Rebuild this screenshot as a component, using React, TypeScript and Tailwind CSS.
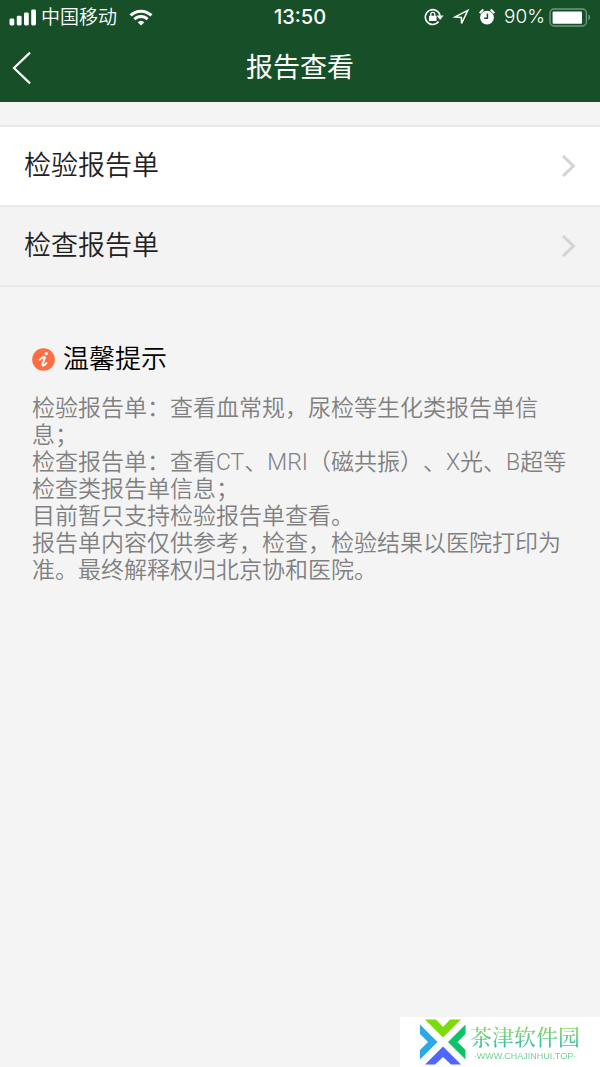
import type { ReactNode } from "react";

const reports = [
  { id: "lab", label: "检验报告单", active: false },
  { id: "exam", label: "检查报告单", active: true },
];

const tips = [
  "检验报告单：查看血常规，尿检等生化类报告单信息；",
  "检查报告单：查看CT、MRI（磁共振）、X光、B超等检查类报告单信息；",
  "目前暂只支持检验报告单查看。",
  "报告单内容仅供参考，检查，检验结果以医院打印为准。最终解释权归北京协和医院。",
];

function StatusBar() {
  return (
    <div className="flex h-[34px] items-center px-2 text-white">
      {/* Left: signal, carrier, wifi */}
      <div className="flex flex-1 items-center">
        <svg width="29" height="17" viewBox="0 0 29 17" fill="currentColor">
          <rect x="1.5" y="9.5" width="4.8" height="7" rx="1.4" />
          <rect x="8.8" y="6.8" width="4.8" height="9.7" rx="1.4" />
          <rect x="16" y="3.6" width="4.8" height="12.9" rx="1.4" />
          <rect x="23.2" y="0.4" width="4.8" height="16.1" rx="1.4" />
        </svg>
        <span className="ml-1 pt-0.5 text-[19px] leading-8 font-[350]">中国移动</span>
        <svg
          className="ml-3"
          width="24"
          height="17"
          viewBox="0 0 24 17"
          fill="none"
          stroke="currentColor"
          strokeWidth="3"
        >
          <path d="M1.6 6.4a14.8 14.8 0 0 1 20.8 0" />
          <path d="M5.4 10.3a9.4 9.4 0 0 1 13.2 0" />
          <path
            d="M12 16.6 8.7 13.2a4.8 4.8 0 0 1 6.6 0z"
            fill="currentColor"
            stroke="none"
          />
        </svg>
      </div>

      <span className="text-[20px] font-medium">13:50</span>

      {/* Right: lock, location, alarm, battery */}
      <div className="flex flex-1 items-center justify-end">
        <svg width="20" height="18" viewBox="0 0 20 18" fill="none" stroke="currentColor">
          <path d="M14.6 13.6A7.4 7.4 0 1 1 16 7.6" strokeWidth="1.6" />
          <path d="M12.600 7.400h7l-3.500 4.600z" fill="currentColor" stroke="none" />
          <rect x="5" y="7.800" width="7.600" height="5.200" rx="0.600" fill="currentColor" stroke="none" />
          <path d="M6.800 8V6.400a2 2 0 0 1 4 0V8" strokeWidth="1.300" />
        </svg>
        <svg
          className="ml-2"
          width="18"
          height="18"
          viewBox="0 0 18 18"
          fill="none"
          stroke="currentColor"
          strokeWidth="1.5"
          strokeLinejoin="miter"
        >
          <path d="M15.800 2.400 3 8.900l6.400.6.200 6z" />
        </svg>
        <svg className="ml-2" width="18" height="18" viewBox="0 0 18 18">
          <circle cx="9" cy="9.6" r="6.9" fill="currentColor" />
          <path
            d="M1.900 5.200A8.800 8.800 0 0 1 5.400 1.700M16.100 5.200a8.800 8.800 0 0 0-3.500-3.500"
            stroke="currentColor"
            strokeWidth="2.200"
            fill="none"
          />
          <path d="M9.400 5.400v4.800H6.200" stroke="#174f28" strokeWidth="1.500" fill="none" />
        </svg>
        <span className="ml-2 text-[19px] font-light">90%</span>
        <svg className="ml-1" width="43" height="19" viewBox="0 0 43 19">
          <rect
            x="1"
            y="1"
            width="36.4"
            height="17"
            rx="4"
            fill="none"
            stroke="#6f9a7a"
            strokeWidth="1.4"
          />
          <rect x="3.6" y="3.4" width="29.4" height="12.4" rx="1" fill="white" />
          <path d="M39.4 6.6c2.4 1 2.4 4.8 0 5.8z" fill="#6f9a7a" />
        </svg>
      </div>
    </div>
  );
}

function NavBar({ title }: { title: string }) {
  return (
    <div className="grid h-[68px] grid-cols-[1fr_auto_1fr] items-center text-white">
      <button type="button" aria-label="返回" className="w-11 pl-3">
        <svg width="20" height="34" viewBox="0 0 20 34" fill="none" stroke="currentColor" strokeWidth="2.2">
          <path d="M18 1.6 2 17l16 15.4" />
        </svg>
      </button>
      <h1 className="text-[27px] leading-10 font-normal">{title}</h1>
    </div>
  );
}

function ReportRow({ label, active }: { label: string; active: boolean }) {
  return (
    <li className="border-b-2 border-[#e9e9e9]">
      <button
        type="button"
        className={`flex h-[78px] w-full items-center justify-between px-6 text-left ${
          active ? "bg-[#f4f3f4]" : "bg-white"
        }`}
      >
        <span className="text-[27px] leading-10 font-[350] text-[#222222]">{label}</span>
        <svg width="15" height="24" viewBox="0 0 15 24" fill="none" stroke="#d3d3d3" strokeWidth="3">
          <path d="M2 2l10.4 10L2 22" />
        </svg>
      </button>
    </li>
  );
}

function Tips({ title, children }: { title: string; children: ReactNode }) {
  return (
    <section className="pt-[52px] pr-6 pl-8">
      <h2 className="flex items-center gap-2 text-[26px] leading-10 font-[350] text-black">
        <svg width="23" height="23" viewBox="0 0 23 23">
          <circle cx="11.5" cy="11.5" r="11.3" fill="#ff6d40" />
          <circle cx="14.2" cy="5.6" r="1.7" fill="white" />
          <path
            d="M7.600 11.800c1.500-1.600 3-2.600 4.600-2.800.8 0 .9.500.6 1.200l-2.300 5.600c-.5 1.400.1 2 1.200 1.500.9-.4 1.900-1.200 2.700-2.200"
            fill="none"
            stroke="white"
            strokeWidth="1.9"
            strokeLinecap="round"
            strokeLinejoin="round"
          />
        </svg>
        {title}
      </h2>
      <div className="mt-4 font-['Roboto','Noto_Sans_CJK_SC',sans-serif] text-[23px] leading-[27px] font-[350] text-[#808080] [text-spacing-trim:space-all]">
        {children}
      </div>
    </section>
  );
}

function SiteBadge() {
  return (
    <a
      href="#"
      className="absolute right-0 bottom-0 flex h-[50px] w-[200px] items-center bg-white pl-5"
    >
      <svg width="46" height="46" viewBox="0 0 46 46">
        <path d="M5 0.500h11l7 7.500 7-7.500h11L23 18.500z" fill="#7cdb0b" />
        <path d="M0 5.500l17.500 17.500L0 40.500V31l8-8-8-8z" fill="#2ba9e6" />
        <path d="M45.500 5.500L28 23l17.500 17.500V31l-8-8 8-8z" fill="#0cc368" />
        <path d="M5 45.500l18-18 18 18H31L23 38l-8 7.500z" fill="#5067ff" />
      </svg>
      <span className="ml-1 flex flex-col text-transparent">
        <span className="bg-linear-to-b from-[#9be03a] to-[#10b9b0] bg-clip-text font-['Noto_Serif_CJK_SC','Noto_Sans_CJK_SC',serif] text-[22px] leading-7 font-medium">
          茶津软件园
        </span>
        <span className="bg-linear-to-b from-[#8fdc5c] to-[#2cc5a8] bg-clip-text text-center font-['Liberation_Sans',sans-serif] text-[9px] leading-3">
          ·WWW.CHAJINHUI.TOP·
        </span>
      </span>
    </a>
  );
}

export default function App() {
  return (
    <div className="relative min-h-screen bg-[#f4f4f5] font-['Inter','Noto_Sans_CJK_SC',sans-serif]">
      <header className="bg-[#174f28]">
        <StatusBar />
        <NavBar title="报告查看" />
      </header>

      <main>
        <ul className="mt-[23px] border-t-2 border-[#e9e9e9]">
          {reports.map((r) => (
            <ReportRow key={r.id} label={r.label} active={r.active} />
          ))}
        </ul>

        <Tips title="温馨提示">
          {tips.map((tip) => (
            <p key={tip}>{tip}</p>
          ))}
        </Tips>
      </main>

      <SiteBadge />
    </div>
  );
}
